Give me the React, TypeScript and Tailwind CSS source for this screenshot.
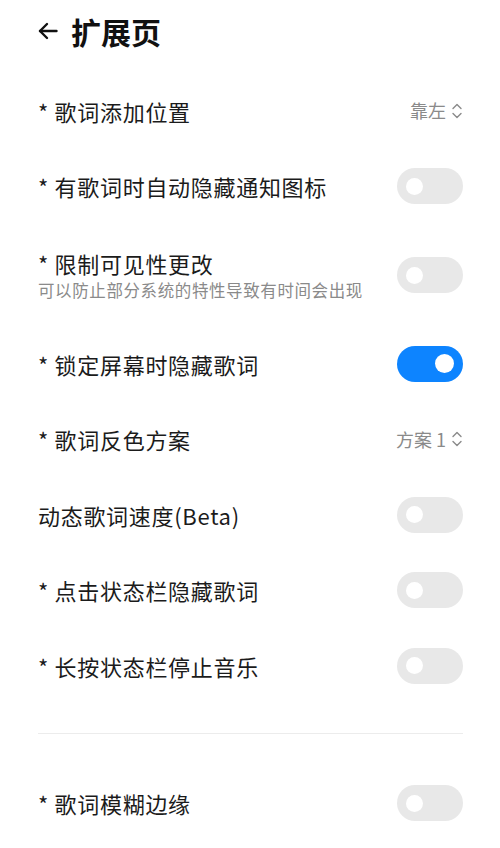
import React from "react";

const FONT = { fontFamily: '"Noto Sans CJK SC", "Noto Sans", sans-serif' };

function Toggle({ on = false }: { on?: boolean }) {
  return (
    <div
      className={
        "flex h-[36px] w-[66px] shrink-0 items-center rounded-full px-[9px] " +
        (on ? "justify-end bg-[#0d84ff]" : "justify-start bg-[#e8e8e8]")
      }
    >
      <div className={on ? "h-[19px] w-[19px] rounded-full bg-white" : "h-[17px] w-[17px] rounded-full bg-white"} />
    </div>
  );
}

function UpDown() {
  return (
    <svg width="12" height="18" viewBox="0 0 12 18" fill="none" stroke="#8a8a8a" strokeWidth="1.4" strokeLinecap="round" strokeLinejoin="round">
      <path d="M2 6.5 L6 2.5 L10 6.5" />
      <path d="M2 11.5 L6 15.5 L10 11.5" />
    </svg>
  );
}

function Row({ label, sub, right, h = "h-[75.5px]" }: { label: string; sub?: string; right: React.ReactNode; h?: string }) {
  return (
    <div className={"flex items-center justify-between " + h}>
      <div className="flex flex-col">
        <div className="text-[22px] leading-[30px] tracking-[0.7px] text-[#1b1b1b]">{label}</div>
        {sub && <div className="mt-[-1px] text-[16.5px] leading-[26px] tracking-[0.6px] text-[#8a8a8a]">{sub}</div>}
      </div>
      {right}
    </div>
  );
}

function Select({ text }: { text: string }) {
  return (
    <div className="flex items-center gap-[5px] text-[18px] text-[#8a8a8a]">
      <span>{text}</span>
      <UpDown />
    </div>
  );
}

export default function App() {
  return (
    <div className="min-h-[848px] w-[500px] bg-white pl-[38px] pr-[37px]" style={FONT}>
      <div className="flex h-[73px] items-center gap-[13px] pb-[12px]">
        <svg width="20" height="18" viewBox="0 0 20 18" fill="none" stroke="#111" strokeWidth="2.4" strokeLinecap="round" strokeLinejoin="round">
          <path d="M18.5 9 H2" />
          <path d="M9 2 L2 9 L9 16" />
        </svg>
        <div className="text-[30px] font-bold leading-none text-[#111]">扩展页</div>
      </div>
      <Row label="* 歌词添加位置" right={<Select text="靠左" />} />
      <Row label="* 有歌词时自动隐藏通知图标" right={<Toggle />} />
      <Row label="* 限制可见性更改" sub="可以防止部分系统的特性导致有时间会出现" right={<Toggle />} h="h-[102px]" />
      <Row label="* 锁定屏幕时隐藏歌词" right={<Toggle on />} />
      <Row label="* 歌词反色方案" right={<Select text="方案 1" />} />
      <Row label="动态歌词速度(Beta)" right={<Toggle />} />
      <Row label="* 点击状态栏隐藏歌词" right={<Toggle />} />
      <Row label="* 长按状态栏停止音乐" right={<Toggle />} />
      <div className="mt-[29px] mb-[32px] h-px bg-[#ececec]" />
      <Row label="* 歌词模糊边缘" right={<Toggle />} />
    </div>
  );
}
